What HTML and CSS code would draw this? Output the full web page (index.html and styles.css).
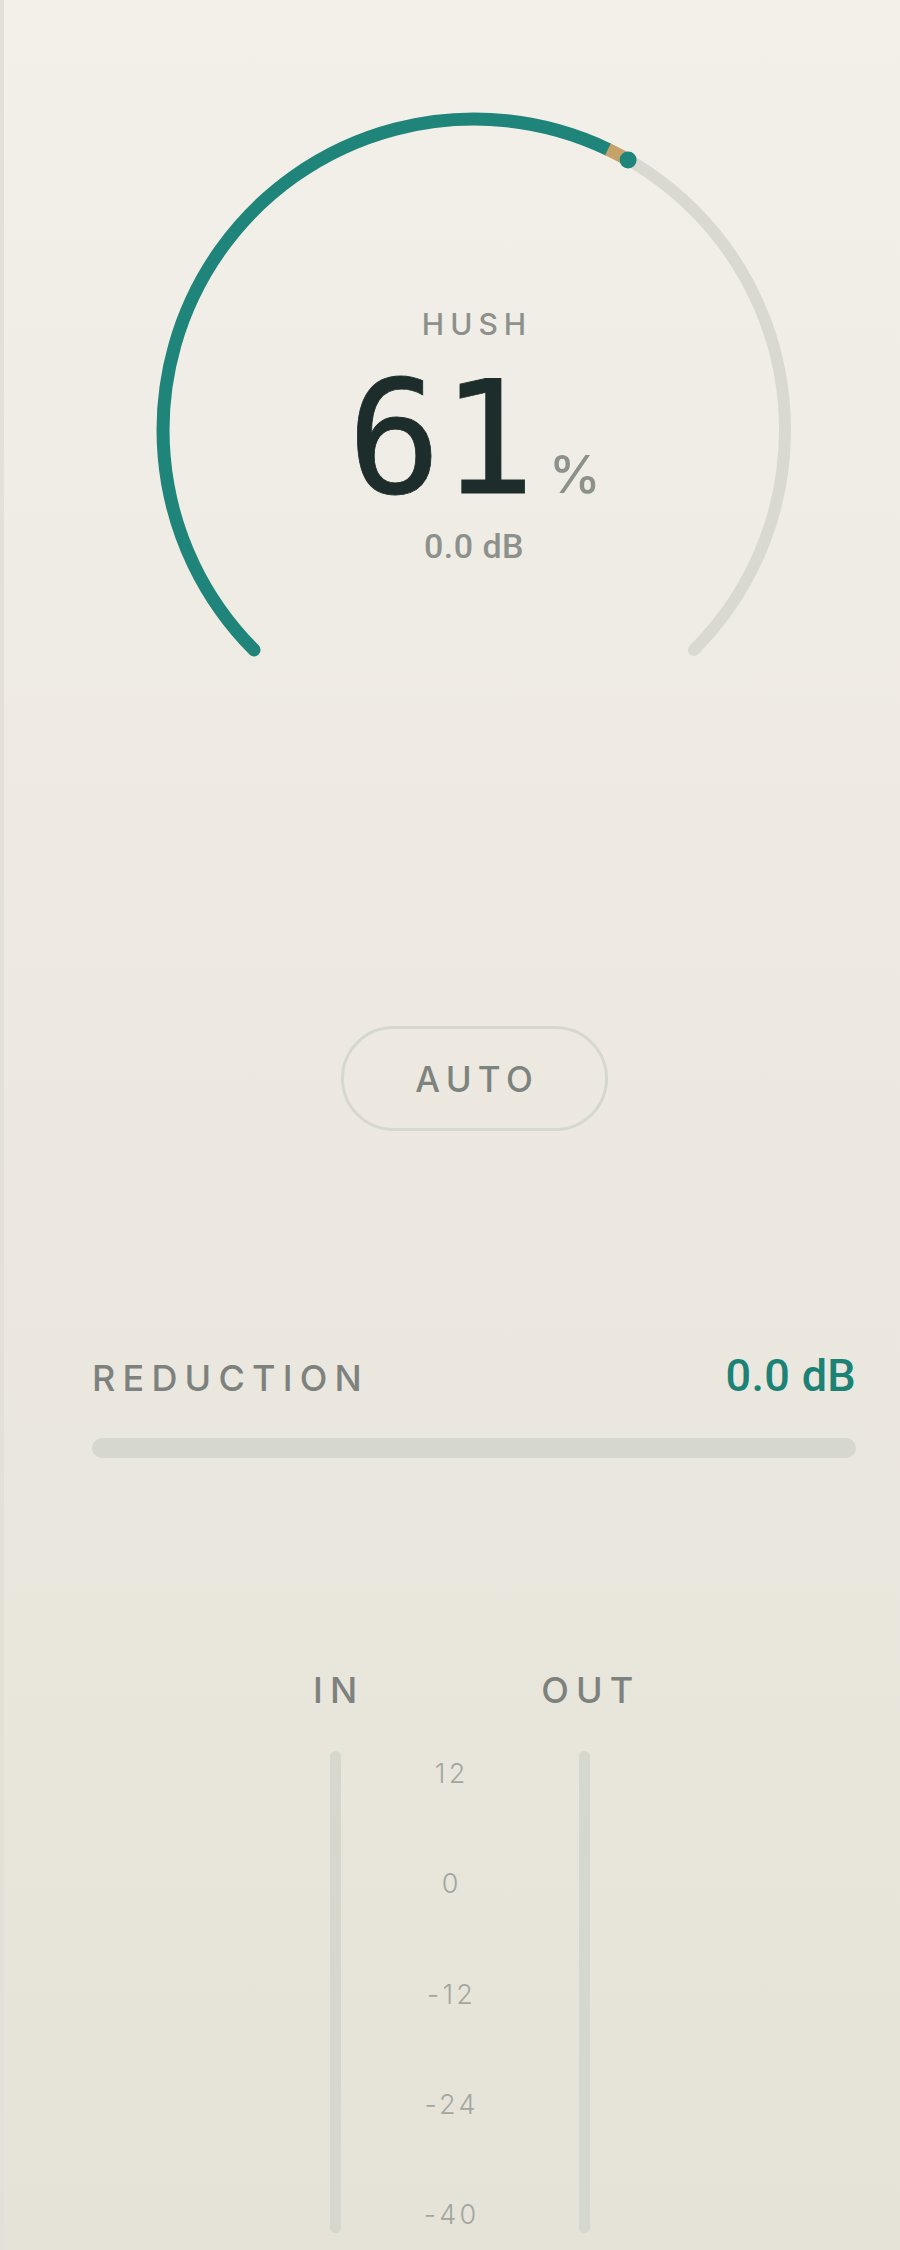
FILE: index.html
```html
<!DOCTYPE html>
<html lang="en">
<head>
  <title>Hush</title>
  <meta name="viewport" content="width=device-width, initial-scale=1" />
  <link rel="stylesheet" href="styles.css">
</head>
<body>
  <div class="panel">
    <div class="dial">
      <svg class="dial-arc" width="764" height="560" viewBox="0 0 764 560">
        <path class="track" d="M 162.1 549.9 A 311 311 0 1 1 601.9 549.9" />
        <path class="value" d="M 162.1 549.9 A 311 311 0 0 1 515.9 49.3" />
        <path class="tick" d="M 515.9 49.3 A 311 311 0 0 1 532.8 58.0" />
        <circle class="knob" cx="536.1" cy="59.9" r="8.5" />
      </svg>
      <div class="readout">
        <div class="readout-label">HUSH</div>
        <div class="readout-value">
          <span class="big">61</span><span class="unit">%</span>
        </div>
        <div class="readout-db">0.0 dB</div>
      </div>
    </div>

    <div class="auto-row">
      <button type="button" class="auto-btn">AUTO</button>
    </div>

    <div class="reduction">
      <div class="reduction-head">
        <span class="caps">REDUCTION</span>
        <span class="reduction-db">0.0 dB</span>
      </div>
      <div class="reduction-bar"></div>
    </div>

    <div class="meters">
      <div class="caps meter-label">IN</div>
      <div></div>
      <div class="caps meter-label">OUT</div>

      <div class="meter-col"><div class="meter-track"></div></div>
      <div class="scale">
        <span>12</span>
        <span>0</span>
        <span>-12</span>
        <span>-24</span>
        <span>-40</span>
      </div>
      <div class="meter-col"><div class="meter-track"></div></div>
    </div>
  </div>
</body>
</html>
```

FILE: styles.css
```css
html, body {
  margin: 0;
  padding: 0;
}
body {
  min-height: 2250px;
  font-family: "Inter", "Liberation Sans", sans-serif;
  background: linear-gradient(180deg, #f2f0e9 0%, #ede9e1 45%, #e5e3d8 100%);
}

.panel {
  border-left: 4px solid #e3e0d8;
  padding: 100px 44px 0 88px;
  min-height: 2150px;
}

/* dial */
.dial {
  position: relative;
  width: 764px;
  height: 560px;
}
.dial-arc {
  display: block;
}
.dial-arc path {
  fill: none;
}
.dial-arc .track {
  stroke: #d9d9d0;
  stroke-width: 12;
  stroke-linecap: round;
}
.dial-arc .value {
  stroke: #1f8479;
  stroke-width: 13;
  stroke-linecap: round;
}
.dial-arc .tick {
  stroke: #c6a26b;
  stroke-width: 13;
}
.dial-arc .knob {
  fill: #1f8479;
}

.readout {
  position: absolute;
  top: 209px;
  left: 0;
  right: 0;
  display: flex;
  flex-direction: column;
  align-items: center;
}
.readout-label {
  font-size: 30px;
  line-height: 1;
  font-weight: 500;
  letter-spacing: 0.2em;
  text-indent: 0.2em;
  color: #8d918c;
}
.readout-value {
  display: flex;
  align-items: baseline;
  margin-top: 22px;
}
.readout-value .big {
  font-family: "DejaVu Sans Mono", "Liberation Mono", monospace;
  font-size: 156px;
  line-height: 1;
  color: #1c2d2b;
  -webkit-text-stroke: 0.8px #1c2d2b;
}
.readout-value .unit {
  font-size: 52px;
  line-height: 1;
  font-weight: 500;
  color: #8d918c;
  margin-left: 14px;
}
.readout-db {
  font-family: "Roboto", "Liberation Sans", sans-serif;
  font-weight: 500;
  font-size: 34px;
  line-height: 1;
  letter-spacing: 0.5px;
  color: #8d918c;
  margin-top: 12px;
}

/* auto */
.auto-row {
  display: flex;
  justify-content: center;
  margin-top: 366px;
}
.auto-btn {
  box-sizing: border-box;
  width: 267px;
  height: 105px;
  border: 3px solid #d6d7ce;
  border-radius: 999px;
  background: transparent;
  font-family: "Inter", "Liberation Sans", sans-serif;
  font-size: 35px;
  font-weight: 500;
  letter-spacing: 0.18em;
  text-indent: 0.18em;
  color: #7d837e;
}

.caps {
  font-size: 36px;
  line-height: 1;
  font-weight: 500;
  letter-spacing: 0.2em;
  color: #7d827e;
}

/* reduction */
.reduction {
  margin-top: 222px;
}
.reduction-head {
  display: flex;
  justify-content: space-between;
  align-items: baseline;
}
.reduction-db {
  font-family: "Roboto", "Liberation Sans", sans-serif;
  font-weight: 500;
  font-size: 45px;
  line-height: 1;
  letter-spacing: 0.3px;
  color: #1d8276;
}
.reduction-bar {
  height: 20px;
  margin-top: 40px;
  border-radius: 10px;
  background: #d6d7cd;
}

/* meters */
.meters {
  display: grid;
  grid-template-columns: 100px 149px 100px;
  row-gap: 43px;
  margin-top: 214px;
  margin-left: 193px;
}
.meter-label {
  text-align: center;
  text-indent: 0.2em;
}
.meter-col {
  display: flex;
  justify-content: center;
}
.meter-track {
  width: 11px;
  height: 482px;
  border-radius: 6px;
  background: #d6d7cd;
}
.scale {
  display: flex;
  flex-direction: column;
  justify-content: space-between;
  align-items: center;
  padding: 5px 19px 0 0;
}
.scale span {
  font-size: 27px;
  line-height: 36px;
  font-weight: 300;
  letter-spacing: 0.12em;
  text-indent: 0.12em;
  color: #a3a69e;
}
```
